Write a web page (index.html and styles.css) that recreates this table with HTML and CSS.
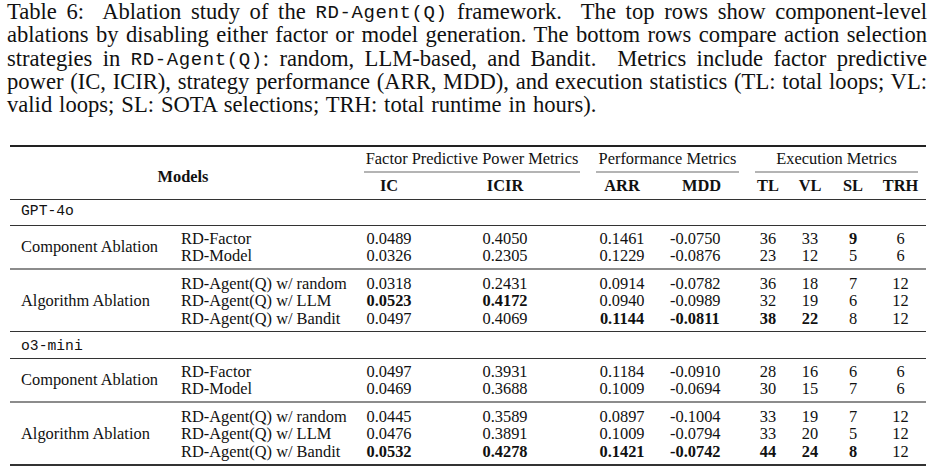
FILE: index.html
```html
<!DOCTYPE html>
<html lang="en">
<head>
<meta charset="utf-8">
<title>Table 6: Ablation study of RD-Agent(Q)</title>
<link rel="stylesheet" href="styles.css">
</head>
<body>
<div class="page">
  <p class="caption">
    <span class="caption-line">Table 6:&nbsp; Ablation study of the <span class="tt">RD-Agent(Q)</span> framework.&nbsp; The top rows show component-level</span>
    <span class="caption-line">ablations by disabling either factor or model generation. The bottom rows compare action selection</span>
    <span class="caption-line">strategies in <span class="tt">RD-Agent(Q)</span>: random, LLM-based, and Bandit.&nbsp; Metrics include factor predictive</span>
    <span class="caption-line">power (IC, ICIR), strategy performance (ARR, MDD), and execution statistics (TL: total loops; VL:</span>
    <span class="caption-line last">valid loops; SL: SOTA selections; TRH: total runtime in hours).</span>
  </p>

  <table class="ablation">
    <colgroup>
      <col class="c-group">
      <col class="c-variant">
      <col class="c-ic">
      <col class="c-icir">
      <col class="c-arr">
      <col class="c-mdd">
      <col class="c-tl">
      <col class="c-vl">
      <col class="c-sl">
      <col class="c-trh">
    </colgroup>
    <thead>
      <tr class="head-groups">
        <th colspan="2" rowspan="2" class="models">Models</th>
        <th colspan="2" class="group"><div class="group-label">Factor Predictive Power Metrics</div></th>
        <th colspan="2" class="group"><div class="group-label">Performance Metrics</div></th>
        <th colspan="4" class="group"><div class="group-label">Execution Metrics</div></th>
      </tr>
      <tr class="head-metrics">
        <th>IC</th><th>ICIR</th><th>ARR</th><th>MDD</th><th>TL</th><th>VL</th><th>SL</th><th>TRH</th>
      </tr>
    </thead>

    <tbody class="label-block">
      <tr><td colspan="10" class="llm-name">GPT-4o</td></tr>
    </tbody>
    <tbody class="component-block">
      <tr class="first">
        <td rowspan="2" class="group-name">Component Ablation</td>
        <td class="variant">RD-Factor</td><td>0.0489</td><td>0.4050</td><td>0.1461</td><td class="mdd">-0.0750</td><td>36</td><td>33</td><td><b>9</b></td><td>6</td>
      </tr>
      <tr class="last">
        <td class="variant">RD-Model</td><td>0.0326</td><td>0.2305</td><td>0.1229</td><td class="mdd">-0.0876</td><td>23</td><td>12</td><td>5</td><td>6</td>
      </tr>
    </tbody>
    <tbody class="algorithm-block">
      <tr class="first">
        <td rowspan="3" class="group-name">Algorithm Ablation</td>
        <td class="variant">RD-Agent(Q) w/ random</td><td>0.0318</td><td>0.2431</td><td>0.0914</td><td class="mdd">-0.0782</td><td>36</td><td>18</td><td>7</td><td>12</td>
      </tr>
      <tr>
        <td class="variant">RD-Agent(Q) w/ LLM</td><td><b>0.0523</b></td><td><b>0.4172</b></td><td>0.0940</td><td class="mdd">-0.0989</td><td>32</td><td>19</td><td>6</td><td>12</td>
      </tr>
      <tr class="last">
        <td class="variant">RD-Agent(Q) w/ Bandit</td><td>0.0497</td><td>0.4069</td><td><b>0.1144</b></td><td class="mdd"><b>-0.0811</b></td><td><b>38</b></td><td><b>22</b></td><td>8</td><td>12</td>
      </tr>
    </tbody>

    <tbody class="label-block after-group">
      <tr><td colspan="10" class="llm-name">o3-mini</td></tr>
    </tbody>
    <tbody class="component-block">
      <tr class="first">
        <td rowspan="2" class="group-name">Component Ablation</td>
        <td class="variant">RD-Factor</td><td>0.0497</td><td>0.3931</td><td>0.1184</td><td class="mdd">-0.0910</td><td>28</td><td>16</td><td>6</td><td>6</td>
      </tr>
      <tr class="last">
        <td class="variant">RD-Model</td><td>0.0469</td><td>0.3688</td><td>0.1009</td><td class="mdd">-0.0694</td><td>30</td><td>15</td><td>7</td><td>6</td>
      </tr>
    </tbody>
    <tbody class="algorithm-block final">
      <tr class="first">
        <td rowspan="3" class="group-name">Algorithm Ablation</td>
        <td class="variant">RD-Agent(Q) w/ random</td><td>0.0445</td><td>0.3589</td><td>0.0897</td><td class="mdd">-0.1004</td><td>33</td><td>19</td><td>7</td><td>12</td>
      </tr>
      <tr>
        <td class="variant">RD-Agent(Q) w/ LLM</td><td>0.0476</td><td>0.3891</td><td>0.1009</td><td class="mdd">-0.0794</td><td>33</td><td>20</td><td>5</td><td>12</td>
      </tr>
      <tr class="last">
        <td class="variant">RD-Agent(Q) w/ Bandit</td><td><b>0.0532</b></td><td><b>0.4278</b></td><td><b>0.1421</b></td><td class="mdd"><b>-0.0742</b></td><td><b>44</b></td><td><b>24</b></td><td><b>8</b></td><td>12</td>
      </tr>
    </tbody>
  </table>
</div>
</body>
</html>
```

FILE: styles.css
```css
* {
  box-sizing: border-box;
}

html,
body {
  margin: 0;
  padding: 0;
  background: #ffffff;
}

body {
  font-family: "Liberation Serif", "Times New Roman", serif;
  color: #111111;
}

.page {
  width: 933px;
}

.tt {
  font-family: "Liberation Mono", "DejaVu Sans Mono", monospace;
}

/* ---------- caption ---------- */
.caption {
  margin: 0 6px 0 7px;
  width: 920px;
  font-size: 22.6px;
  line-height: 23.35px;
}

.caption .tt {
  font-size: 19px;
  letter-spacing: 0.6px;
  line-height: 18px;
  vertical-align: 1px;
}

.caption-line {
  display: block;
  height: 23.35px;
  text-align: justify;
  text-align-last: justify;
}

.caption-line.last {
  text-align-last: left;
  word-spacing: 1.3px;
}

/* ---------- table ---------- */
.ablation {
  margin: 28px 0 0 10px;
  width: 916px;
  table-layout: fixed;
  border-collapse: collapse;
  font-size: 16.4px;
  line-height: 17.4px;
}

.c-group   { width: 160px; }
.c-variant { width: 186px; }
.c-ic      { width: 66px; }
.c-icir    { width: 166px; }
.c-arr     { width: 68px; }
.c-mdd     { width: 91px; }
.c-tl      { width: 42px; }
.c-vl      { width: 42px; }
.c-sl      { width: 44px; }
.c-trh     { width: 51px; }

.ablation th,
.ablation td {
  padding: 0;
  text-align: center;
  vertical-align: middle;
  white-space: nowrap;
}

.ablation b {
  font-weight: bold;
}

/* header */
.ablation thead {
  border-top: 2px solid #222222;
}

.ablation th.models {
  font-weight: bold;
  padding-top: 9px;
}

.ablation th.group {
  font-weight: normal;
  padding: 3px 0 0;
}

.group-label {
  margin: 0 8px;
  padding-bottom: 4px;
  border-bottom: 2px solid #b4b4b4;
}

.head-metrics th {
  font-weight: bold;
  padding: 4px 0 4px;
}

/* blocks */
.label-block {
  border-top: 1px solid #333333;
}

.ablation td.llm-name {
  text-align: left;
  padding: 3px 0 5px 11px;
  font-family: "Liberation Mono", "DejaVu Sans Mono", monospace;
  font-size: 14.7px;
}

.ablation .after-group td.llm-name {
  padding: 6px 0 2px 11px;
}

.component-block {
  border-top: 1px solid #333333;
}

.component-block .first td {
  padding-top: 4px;
}

.component-block .last td {
  padding-bottom: 3px;
}

.algorithm-block {
  border-top: 2px solid #8c8c8c;
}

.algorithm-block .first td {
  padding-top: 5px;
}

.algorithm-block .last td {
  padding-bottom: 4.5px;
}

.algorithm-block.final {
  border-bottom: 2px solid #333333;
}

.ablation td.group-name {
  text-align: left;
  padding: 0 0 0 11px;
  vertical-align: middle;
}

.ablation td.variant {
  text-align: left;
  padding-left: 11px;
}

.ablation td.mdd {
  text-align: left;
  padding-left: 14px;
}
```
